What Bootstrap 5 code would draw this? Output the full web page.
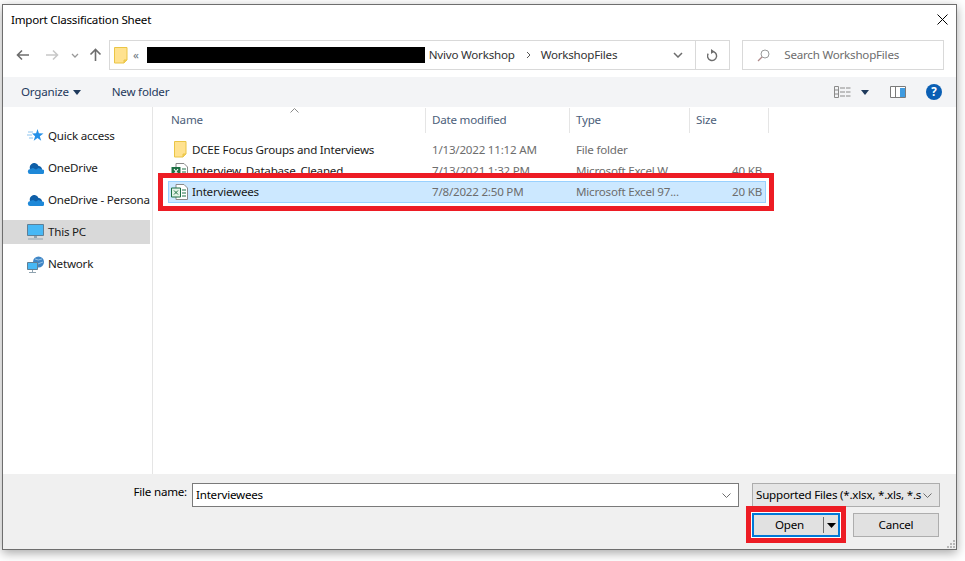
<!DOCTYPE html>
<html lang="en">
<head>
<meta charset="UTF-8">
<title>Import Classification Sheet</title>
<link rel="stylesheet" href="https://cdn.jsdelivr.net/npm/bootstrap@5.3.0/dist/css/bootstrap.min.css">
<style>
html, body { height: 100%; background: #fff; overflow: hidden; }
body { font: 11.6px/16px "Noto Sans", "Liberation Sans", sans-serif; letter-spacing: -.22px; color: #000; padding: 4px 8px 11px 2px; }
.dialog { height: 546px; border: 1px solid #6e6e6e; background: #fff; box-shadow: 0 3px 10px rgba(0,0,0,.35); }
.titlebar { height: 30px; padding: 0 8px; }
.close-x { margin: -2px 0 0 0; }
.navrow { height: 42px; padding: 5px 12px 7px 13px; }
.navbtns { width: 93px; }
.box { height: 30px; border: 1px solid #d9d9d9; }
.addr { width: 622px; }
.crumbs { color: #333; }
.redact { width: 278px; height: 16px; background: #000; margin: 0 4px 0 6px; }
.addr-end { width: 34px; height: 100%; border-left: 1px solid #d9d9d9; }
.search { width: 202px; margin-left: 12px; padding-left: 14px; color: #6d6d6d; }
.cmdbar { height: 30px; background: #f3f4f6; padding: 0 14px 0 18px; color: #1f3a5c; }
.main { min-height: 0; }
.side { width: 147px; padding-top: 17px; }
.nav-item-row { height: 24px; margin-bottom: 8px; padding-left: 24px; white-space: nowrap; overflow: hidden; color: #1a1a1a; }
.nav-item-row svg { flex: none; margin-right: 4px; }
.nav-item-row.active { background: #d9d9d9; }
.files { border-left: 1px solid #e5e5e5; margin-left: 2px; padding-left: 15px; }
.cols { display: grid; grid-template-columns: 257px 144px 120px 77px; }
.cols > div { white-space: nowrap; overflow: hidden; }
.head { height: 25px; color: #4c607a; margin-top: 1px; position: relative; }
.head > div { padding: 0 0 1px 7px; border-right: 1px solid #e5e5e5; display: flex; align-items: center; margin-right: -1px; }
.head > .col-name { padding-left: 3px; }
.head > div:last-child { margin-right: -3px; }
.sort { position: absolute; left: 122px; top: 0; }
.rows { padding-top: 6px; color: #6d6d6d; }
.row-file { height: 21px; align-items: center; }
.row-file .fname { color: #1a1a1a; display: flex; align-items: center; padding-left: 3px; }
.row-file .fname svg { margin-right: 3px; flex: none; }
.row-file .fdate { padding-left: 7px; }
.row-file .ftype { padding-left: 7px; }
.row-file .fsize { text-align: right; padding-right: 4px; }
.frame { position: relative; border: 5px solid #ed1c24; background: #fff; width: 616px; height: 38px; margin: -8px 0 0 -10px; padding: 3px 3px 3px 5px; }
.frame .row-file { background: #cce8ff; box-shadow: inset 0 0 0 1px #99d1ff; height: 22px; }
.footer-bar { height: 75px; background: #f0f0f0; position: relative; padding: 9px 17px 0 0; }
.lbl { width: 189px; text-align: right; padding-right: 5px; line-height: 18px; }
.fname-input { width: 547px; height: 24px; border: 1px solid #7a7a7a; background: #fff; padding: 0 3px; }
.filter { width: 188px; height: 24px; margin-left: 13px; border: 1px solid #adadad; background: #e5e5e5; padding: 0 3px; white-space: nowrap; overflow: hidden; }
.btnrow { margin-top: -1px; }
.open-frame { border: 5px solid #ed1c24; border-top-width: 6px; padding: 1px; background: #fff; }
.win-btn { height: 24px; background: #e1e1e1; border: 1px solid #adadad; color: #000; font: inherit; letter-spacing: inherit; padding: 0; border-radius: 0; }
.open-btn { width: 88px; border: 2px solid #0078d7; }
.open-btn .lab { flex: 1; text-align: center; padding-left: 2px; }
.open-btn .sep { width: 1px; height: 16px; background: #6d6d6d; }
.open-btn .drop { width: 14px; display: flex; justify-content: center; }
.cancel-btn { width: 86px; margin-left: 7px; margin-top: 7px; }
.grip { position: absolute; right: 1px; bottom: 1px; }
</style>
</head>
<body>
<div class="dialog d-flex flex-column">
  <div class="titlebar d-flex align-items-center justify-content-between">
    <span>Import Classification Sheet</span>
    <svg class="close-x" width="11" height="11" viewBox="0 0 11 11"><path d="M.5.5l10 10M10.500.5l-10 10" stroke="#000" fill="none"/></svg>
  </div>
  <div class="navrow d-flex align-items-center">
    <div class="navbtns d-flex align-items-center flex-shrink-0">
      <svg width="14" height="12" viewBox="0 0 14 12"><path d="M13 6H2M6 1.500L1.500 6 6 10.500" stroke="#6d6d6d" stroke-width="1.600" fill="none"/></svg>
      <svg width="14" height="12" viewBox="0 0 14 12" style="margin-left:15px"><path d="M1 6h11M8 1.500L12.500 6 8 10.500" stroke="#c8c8c8" stroke-width="1.600" fill="none"/></svg>
      <svg width="8" height="5" viewBox="0 0 8 5" style="margin-left:12px"><path d="M1 1l3 3 3-3" stroke="#999" stroke-width="1.300" fill="none"/></svg>
      <svg width="13" height="14" viewBox="0 0 13 14" style="margin-left:10px"><path d="M6.500 13V2M1.500 6.500l5-5 5 5" stroke="#6d6d6d" stroke-width="1.600" fill="none"/></svg>
    </div>
    <div class="box addr d-flex align-items-center ps-1 crumbs">
      <svg width="14" height="17" viewBox="0 0 14 17" class="flex-shrink-0"><path d="M.5.5h12.500v12.500l-3 3H.5z" fill="#ffe28f" stroke="#eac545"/><path d="M10 16v-3h3" fill="#f4cf5f" stroke="#eac545"/></svg>
      <span class="text-secondary" style="margin-left:5px">«</span>
      <span class="redact" style="margin-left:8px"></span>
      <span>Nvivo Workshop</span>
      <svg width="5" height="8" viewBox="0 0 5 8" style="margin:0 10px 0 11px"><path d="M1 1l3 3-3 3" stroke="#555" fill="none"/></svg>
      <span>WorkshopFiles</span>
      <svg width="10" height="6" viewBox="0 0 10 6" class="ms-auto" style="margin-right:12px"><path d="M1 1l4 4 4-4" stroke="#6d6d6d" stroke-width="1.500" fill="none"/></svg>
      <div class="addr-end d-flex align-items-center justify-content-center">
        <svg width="12" height="13" viewBox="0 0 12 13"><path d="M5 2.500a4.500 4.500 0 1 1-3.800 2.200" stroke="#6d6d6d" stroke-width="1.400" fill="none"/><path d="M4 0l3.500 2.600L4 5z" fill="#6d6d6d"/></svg>
      </div>
    </div>
    <div class="box search d-flex align-items-center">
      <svg width="13" height="13" viewBox="0 0 13 13" class="flex-shrink-0" style="margin-right:14px"><circle cx="8" cy="5" r="4" stroke="#9a9a9a" fill="none"/><path d="M5 8l-4 4" stroke="#b08a8a" stroke-width="1.200"/></svg>
      <span>Search WorkshopFiles</span>
    </div>
  </div>
  <div class="cmdbar d-flex align-items-center flex-shrink-0">
    <span>Organize</span>
    <svg width="8" height="5" viewBox="0 0 8 5" class="ms-1"><path d="M0 0h8L4 5z" fill="#1f3a5c"/></svg>
    <span style="margin-left:31px">New folder</span>
    <svg class="ms-auto" width="17" height="12" viewBox="0 0 17 12"><path d="M.5.500h4v11h-4zM.5 4h4M.5 8h4M6 2h5M6 6h5M6 10h5M12 2h4.500M12 6h4.500M12 10h4.500" stroke="#8a8a8a" fill="none"/></svg>
    <svg width="8" height="5" viewBox="0 0 8 5" style="margin-left:10px"><path d="M0 0h8L4 5z" fill="#1f3a5c"/></svg>
    <svg width="16" height="12" viewBox="0 0 16 12" style="margin-left:21px"><path d="M.5.500h15v11H.5z" fill="#fff" stroke="#7a7a7a"/><path d="M5.500 1v10" stroke="#7a7a7a"/><path d="M10 2h5v9h-5z" fill="#3f9be0"/></svg>
    <svg width="16" height="16" viewBox="0 0 16 16" style="margin-left:20px"><circle cx="8" cy="8" r="8" fill="#0a5fb4"/><text x="8" y="12" text-anchor="middle" font-size="11.500" font-weight="700" fill="#fff" font-family="Noto Sans, sans-serif">?</text></svg>
  </div>
  <div class="main d-flex flex-grow-1">
    <div class="side flex-shrink-0">
      <div class="nav-item-row d-flex align-items-center">
        <svg width="17" height="14" viewBox="0 0 17 14"><path d="M10.500 0l1.400 4.300 4.600.1-3.700 2.800 1.400 4.600-3.700-2.700-3.800 2.700 1.400-4.600L5 4.400l4.100-.1z" fill="#2490e8"/><path d="M1 3h5M0 6h5M2 9h4" stroke="#8cc4ef"/></svg>
        <span>Quick access</span>
      </div>
      <div class="nav-item-row d-flex align-items-center">
        <svg width="17" height="11" viewBox="0 0 17 11"><path d="M3 6a4.500 4.500 0 0 1 8.500-3A3.500 3.500 0 0 1 15 7H4z" fill="#0f5fa8"/><path d="M3.500 11a2.500 2.500 0 0 1-.3-5L6 5l3 1.500L11.500 5l4 1.500a2.300 2.300 0 0 1-1 4.500z" fill="#1e88d8"/></svg>
        <span>OneDrive</span>
      </div>
      <div class="nav-item-row d-flex align-items-center">
        <svg width="17" height="11" viewBox="0 0 17 11"><path d="M3 6a4.500 4.500 0 0 1 8.500-3A3.500 3.500 0 0 1 15 7H4z" fill="#0f5fa8"/><path d="M3.500 11a2.500 2.500 0 0 1-.3-5L6 5l3 1.500L11.500 5l4 1.500a2.300 2.300 0 0 1-1 4.500z" fill="#1e88d8"/></svg>
        <span>OneDrive - Personal</span>
      </div>
      <div class="nav-item-row active d-flex align-items-center">
        <svg width="17" height="16" viewBox="0 0 17 16"><path d="M.5.500h16v11H.5z" fill="#47b8f5" stroke="#5f7f95"/><path d="M7 12h3v2H7z" fill="#8fa3b0"/><path d="M1 15h15" stroke="#8fa3b0"/></svg>
        <span>This PC</span>
      </div>
      <div class="nav-item-row d-flex align-items-center">
        <svg width="17" height="17" viewBox="0 0 17 17"><circle cx="11.500" cy="6" r="5.500" fill="#3f86c6"/><path d="M8 3q3 2 7 0M6.500 7q5 2 9.500-1" stroke="#a9d2f0" stroke-width=".8" fill="none"/><path d="M.5 6.500h10v7H.5z" fill="#47b8f5" stroke="#5f7f95"/><path d="M5.500 14v2M2 16.500h7" stroke="#8fa3b0"/></svg>
        <span>Network</span>
      </div>
    </div>
    <div class="files flex-grow-1">
      <div class="cols head">
        <svg class="sort" width="9" height="5" viewBox="0 0 9 5"><path d="M.5 4.500l4-4 4 4" stroke="#8a8a8a" fill="none"/></svg>
        <div class="col-name">Name</div><div>Date modified</div><div>Type</div><div>Size</div>
      </div>
      <div class="rows">
        <div class="cols row-file">
          <div class="fname"><svg width="13" height="17" viewBox="0 0 13 17" style="margin:0 5px 0 3px"><path d="M.5.5h11.500v12.500l-3 3H.5z" fill="#ffe28f" stroke="#eac545"/><path d="M9 16v-3h3" fill="#f4cf5f" stroke="#eac545"/></svg>DCEE Focus Groups and Interviews</div>
          <div class="fdate">1/13/2022 11:12 AM</div><div class="ftype">File folder</div><div class="fsize"></div>
        </div>
        <div class="cols row-file">
          <div class="fname"><svg width="17" height="16" viewBox="0 0 17 16" style="margin:0 4px 0 0"><path d="M5 .5h8l3.500 3.500v11.500H5z" fill="#fff" stroke="#8a8a8a"/><path d="M.5 4h9v9h-9z" fill="#1d7044"/><path d="M3 6l4 5M7 6l-4 5" stroke="#fff" stroke-width="1.200"/><path d="M11 6h4M11 9h4M11 12h4" stroke="#1d7044"/></svg>Interview_Database_Cleaned</div>
          <div class="fdate">7/13/2021 1:32 PM</div><div class="ftype">Microsoft Excel W</div><div class="fsize">40 KB</div>
        </div>
        <div class="frame">
          <div class="cols row-file">
            <div class="fname"><svg width="17" height="16" viewBox="0 0 17 16" style="margin:0 4px 0 0"><path d="M5 .5h8l3.500 3.500v11.500H5z" fill="#fff" stroke="#8a8a8a"/><path d="M.5 4h9v9h-9z" fill="#e3f3e8" stroke="#1d7044"/><path d="M3 6.500l4 4M7 6.500l-4 4" stroke="#1d7044"/><path d="M11 6h4M11 9h4M11 12h4" stroke="#1d7044"/></svg>Interviewees</div>
            <div class="fdate">7/8/2022 2:50 PM</div><div class="ftype">Microsoft Excel 97...</div><div class="fsize">20 KB</div>
          </div>
        </div>
      </div>
    </div>
  </div>
  <div class="footer-bar flex-shrink-0">
    <div class="d-flex">
      <div class="lbl flex-shrink-0">File name:</div>
      <div class="fname-input d-flex align-items-center justify-content-between flex-shrink-0">
        <span>Interviewees</span>
        <svg width="9" height="5" viewBox="0 0 9 5" class="me-1"><path d="M.5.5l4 4 4-4" stroke="#6d6d6d" fill="none"/></svg>
      </div>
      <div class="filter d-flex align-items-center justify-content-between flex-shrink-0">
        <span>Supported Files (*.xlsx, *.xls, *.s</span>
        <svg width="9" height="5" viewBox="0 0 9 5" class="me-1 flex-shrink-0"><path d="M.5.5l4 4 4-4" stroke="#6d6d6d" fill="none"/></svg>
      </div>
    </div>
    <div class="d-flex justify-content-end btnrow">
      <div class="open-frame">
        <button class="btn win-btn open-btn d-flex align-items-center">
          <span class="lab">Open</span><span class="sep"></span>
          <span class="drop"><svg width="9" height="5" viewBox="0 0 9 5"><path d="M0 0h9L4.500 5z" fill="#000"/></svg></span>
        </button>
      </div>
      <button class="btn win-btn cancel-btn">Cancel</button>
    </div>
    <svg class="grip" width="9" height="9" viewBox="0 0 9 9"><path d="M7 1h2v2H7zM4 4h2v2H4zM7 4h2v2H7zM1 7h2v2H1zM4 7h2v2H4zM7 7h2v2H7z" fill="#b8b8b8"/></svg>
  </div>
</div>
<script src="https://cdn.jsdelivr.net/npm/bootstrap@5.3.0/dist/js/bootstrap.bundle.min.js"></script>
</body>
</html>
